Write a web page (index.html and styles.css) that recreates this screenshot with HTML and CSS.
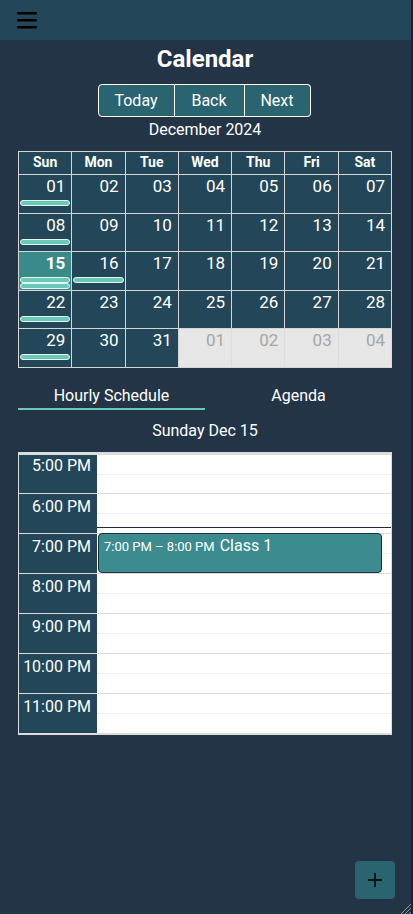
FILE: index.html
```html
<!DOCTYPE html>
<html>
<head>
<meta charset="utf-8">
<link rel="stylesheet" href="styles.css">
</head>
<body>
<div class="app">
  <header class="topbar">
    <svg class="burger" width="20" height="18" viewBox="0 0 20 18"><rect x="0" y="1" width="20" height="2.5" rx="1"/><rect x="0" y="8" width="20" height="2.5" rx="1"/><rect x="0" y="15" width="20" height="2.5" rx="1"/></svg>
  </header>
  <main class="main">
    <h1 class="title">Calendar</h1>
    <div class="nav">
      <button class="navbtn">Today</button><button class="navbtn">Back</button><button class="navbtn">Next</button>
    </div>
    <div class="month">December 2024</div>
    <div class="cal">
      <div class="hd">Sun</div><div class="hd">Mon</div><div class="hd">Tue</div><div class="hd">Wed</div><div class="hd">Thu</div><div class="hd">Fri</div><div class="hd">Sat</div>
      <div class="day"><span class="num">01</span><span class="bar"></span></div>
      <div class="day"><span class="num">02</span></div>
      <div class="day"><span class="num">03</span></div>
      <div class="day"><span class="num">04</span></div>
      <div class="day"><span class="num">05</span></div>
      <div class="day"><span class="num">06</span></div>
      <div class="day"><span class="num">07</span></div>
      <div class="day"><span class="num">08</span><span class="bar"></span></div>
      <div class="day"><span class="num">09</span></div>
      <div class="day"><span class="num">10</span></div>
      <div class="day"><span class="num">11</span></div>
      <div class="day"><span class="num">12</span></div>
      <div class="day"><span class="num">13</span></div>
      <div class="day"><span class="num">14</span></div>
      <div class="day sel"><span class="num">15</span><span class="bar"></span><span class="bar"></span></div>
      <div class="day"><span class="num">16</span><span class="bar"></span></div>
      <div class="day"><span class="num">17</span></div>
      <div class="day"><span class="num">18</span></div>
      <div class="day"><span class="num">19</span></div>
      <div class="day"><span class="num">20</span></div>
      <div class="day"><span class="num">21</span></div>
      <div class="day"><span class="num">22</span><span class="bar"></span></div>
      <div class="day"><span class="num">23</span></div>
      <div class="day"><span class="num">24</span></div>
      <div class="day"><span class="num">25</span></div>
      <div class="day"><span class="num">26</span></div>
      <div class="day"><span class="num">27</span></div>
      <div class="day"><span class="num">28</span></div>
      <div class="day"><span class="num">29</span><span class="bar"></span></div>
      <div class="day"><span class="num">30</span></div>
      <div class="day"><span class="num">31</span></div>
      <div class="day off"><span class="num">01</span></div>
      <div class="day off"><span class="num">02</span></div>
      <div class="day off"><span class="num">03</span></div>
      <div class="day off"><span class="num">04</span></div>
    </div>
    <div class="tabs">
      <div class="tab active">Hourly Schedule</div>
      <div class="tab">Agenda</div>
    </div>
    <div class="dayname">Sunday Dec 15</div>
    <div class="sched">
      <div class="times">
        <div class="time">5:00 PM</div>
        <div class="time">6:00 PM</div>
        <div class="time">7:00 PM</div>
        <div class="time">8:00 PM</div>
        <div class="time">9:00 PM</div>
        <div class="time">10:00 PM</div>
        <div class="time">11:00 PM</div>
      </div>
      <div class="slots">
        <div class="slot"></div>
        <div class="slot"></div>
        <div class="slot"></div>
        <div class="slot"></div>
        <div class="slot"></div>
        <div class="slot"></div>
        <div class="slot"></div>
        <div class="now"></div>
        <div class="event"><span class="etime">7:00 PM – 8:00 PM</span><span class="ename">Class 1</span></div>
      </div>
    </div>
  </main>
  <button class="fab"><svg width="16" height="16" viewBox="0 0 16 16"><path d="M8 1v14M1 8h14" stroke="#111" stroke-width="1.8"/></svg></button>
  <svg class="grip" width="14" height="14" viewBox="0 0 14 14"><path d="M14 2L2 14M14 6L6 14M14 10L10 14" stroke="#8a97a3" stroke-width="1"/></svg>
</div>
</body>
</html>
```
FILE: styles.css
```css
html { background: #1a2430; }
body {
  margin: 0;
  width: 411px;
  height: 914px;
  font-family: Roboto, "Liberation Sans", sans-serif;
  color: #fff;
  background: #233446;
}
.app { position: relative; height: 914px; }
.topbar {
  height: 40px;
  background: #234758;
  display: flex;
  align-items: center;
  padding-left: 17px;
}
.burger { fill: #000; display: block; margin-top: -1px; }
.main { padding: 0 19px 0 18px; }
.title {
  margin: 0;
  padding-top: 5px;
  text-align: center;
  font-size: 24px;
  font-weight: 700;
  line-height: 28px;
}
.nav {
  display: flex;
  justify-content: center;
  margin-top: 11px;
  margin-left: -2px;
}
.navbtn {
  font-family: inherit;
  font-size: 16px;
  color: #fff;
  background: #2a6470;
  border: 1px solid #fff;
  height: 33px;
  padding: 0;
  margin: 0;
}
.navbtn:nth-child(1) { width: 77px; border-radius: 4px 0 0 4px; }
.navbtn:nth-child(2) { width: 70px; border-left: 0; }
.navbtn:nth-child(3) { width: 66px; border-left: 0; border-radius: 0 4px 4px 0; }
.month {
  text-align: center;
  font-size: 16px;
  line-height: 18px;
  margin-top: 4px;
}
.cal {
  margin-top: 12px;
  display: grid;
  grid-template-columns: repeat(7, 1fr);
  grid-template-rows: 23px repeat(5, 38.6px);
  border-left: 1px solid #d6d6d6;
  border-top: 1px solid #d6d6d6;
  background: #234758;
}
.hd, .day {
  border-right: 1px solid #d6d6d6;
  border-bottom: 1px solid #d6d6d6;
}
.hd {
  text-align: center;
  font-weight: 700;
  font-size: 14px;
  line-height: 21px;
}
.day {
  display: flex;
  flex-direction: column;
  align-items: stretch;
  padding: 2px 1px 0 1px;
  overflow: hidden;
}
.num {
  text-align: right;
  font-size: 17px;
  line-height: 19px;
  padding-right: 5px;
  margin-bottom: 4px;
}
.bar {
  display: block;
  height: 4px;
  border: 1px solid #e8f6f2;
  border-radius: 4px;
  background: #6ac8b6;
  margin-bottom: 0;
}
.sel { background: #3a8a8a; }
.sel .num { font-weight: 700; }
.off { background: #e6e6e6; }
.off .num { color: #a6a6a6; }
.day.off { border-right-color: #dcdcdc; }
.tabs {
  display: flex;
  margin-top: 16px;
}
.tab {
  flex: 1;
  text-align: center;
  font-size: 16px;
  line-height: 20px;
  padding-top: 2px;
  padding-bottom: 2px;
  border-bottom: 2px solid transparent;
}
.tab.active { border-bottom-color: #6ac8b6; }
.dayname {
  text-align: center;
  font-size: 16px;
  line-height: 20px;
  margin-top: 11px;
}
.sched {
  margin-top: 11px;
  display: flex;
  border-top: 3px solid #dcdcdc;
  border-left: 1px solid #dcdcdc;
  border-right: 1px solid #dcdcdc;
  border-bottom: 2px solid #dcdcdc;
  background: #fff;
}
.times { width: 78px; background: #234758; }
.time {
  height: 40px;
  box-sizing: border-box;
  text-align: right;
  padding-right: 6px;
  font-size: 16px;
  line-height: 20px;
  padding-top: 3px;
}
.time + .time, .slot + .slot { border-top: 1px solid #dcdcdc; }
.slots { flex: 1; position: relative; }
.slot {
  height: 40px;
  box-sizing: border-box;
  background: linear-gradient(#fff 19px, #f0f0f0 19px, #f0f0f0 20px, #fff 20px);
}
.slot:first-child { height: 38px; }
.time:first-child { height: 38px; padding-top: 1px; }
.now {
  position: absolute;
  left: 0; right: 0;
  top: 72px;
  height: 1px;
  background: #1f2e3e;
}
.event {
  position: absolute;
  left: 1px;
  width: 284px;
  top: 78px;
  height: 40px;
  box-sizing: border-box;
  background: #3b8b8f;
  border: 1px solid #1f3140;
  border-radius: 4px;
  padding: 2px 5px;
  display: flex;
  align-items: baseline;
  gap: 5px;
  color: #fff;
}
.etime { font-size: 13px; }
.ename { font-size: 16px; }
.fab {
  position: absolute;
  left: 355px;
  top: 861px;
  width: 40px;
  height: 38px;
  border: 0;
  border-radius: 4px;
  background: #2a6470;
  padding: 0;
  display: flex;
  align-items: center;
  justify-content: center;
}
.grip { position: absolute; right: -2px; bottom: 0; }
```
